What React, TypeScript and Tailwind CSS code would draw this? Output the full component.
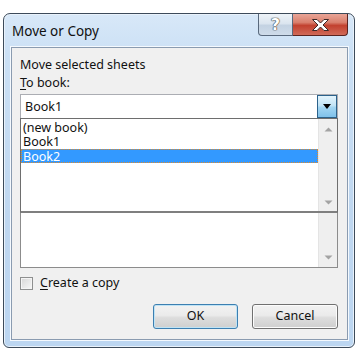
import React from "react";

const font = { fontFamily: '"Noto Sans", "Open Sans", Arial, sans-serif' };

function UpArrow() {
  return (
    <svg width="9" height="5" viewBox="0 0 9 5">
      <path d="M0.5 4.5 L4.5 0.5 L8.5 4.5 Z" fill="#a3a3a3" />
    </svg>
  );
}
function DownArrow() {
  return (
    <svg width="9" height="5" viewBox="0 0 9 5">
      <path d="M0.5 0.5 L4.5 4.5 L8.5 0.5 Z" fill="#a3a3a3" />
    </svg>
  );
}

export default function App() {
  return (
    <div className="w-[360px] h-[360px] bg-white pt-[13px] pl-[3px]" style={font}>
      <div className="w-[352px] h-[335px] border border-[#3d4b5a] rounded-t-[7px] rounded-b-[6px] bg-[linear-gradient(180deg,#d8e8f8_0%,#cbe0f5_12%,#bfd7f0_60%,#bcd6f1_100%)] flex flex-col shadow-[inset_0_0_0_1px_#e9f2fb]">
        {/* title bar */}
        <div className="h-[33px] flex items-start">
          <div className="pl-[8px] pt-[8px] text-[13.5px] leading-[18px] text-[#111]">Move or Copy</div>
          <div className="ml-auto mr-[6px] flex">
            <div className="w-[35px] h-[22px] border border-[#59697d] border-t-0 rounded-bl-[4px] bg-[linear-gradient(180deg,#eef3f8_0%,#dbe5ef_45%,#c3d2e2_55%,#cfdcea_100%)] flex items-center justify-center">
              <span className="text-[16px] leading-[16px] font-bold text-white [text-shadow:0_0_1px_#3b3b3b,0_0_1px_#3b3b3b,0_0_1px_#3b3b3b]" style={{ fontFamily: '"DejaVu Sans", sans-serif' }}>?</span>
            </div>
            <div className="w-[55px] h-[22px] border border-[#5a2420] border-t-0 border-l-0 rounded-br-[4px] bg-[linear-gradient(180deg,#e9a597_0%,#d9806e_40%,#c2412f_55%,#d06a58_100%)] flex items-center justify-center">
              <svg width="19" height="14" viewBox="0 0 19 14">
                <path d="M1.5 1.5 H6 L9.5 5 L13 1.5 H17.5 L12 7 L17.5 12.5 H13 L9.5 9 L6 12.5 H1.5 L7 7 Z" fill="#ffffff" stroke="#3b2a2a" strokeWidth="1" strokeLinejoin="round" />
              </svg>
            </div>
          </div>
        </div>
        {/* panel */}
        <div className="ml-[7px] mr-[6px] h-[293px] border border-[#8a9bb0] bg-[#f0f0f0] pl-[8px] pr-[9px] pt-[8px] flex flex-col text-[12.5px] text-[#111] shadow-[0_0_0_1px_#f4f9fe]">
          <div className="h-[18px] leading-[18px]">Move selected sheets</div>
          <div className="h-[18px] leading-[18px]"><span className="underline underline-offset-2">T</span>o book:</div>
          {/* combo */}
          <div className="mt-[2px] h-[24px] bg-white border border-[#abadb3] border-b-0 flex items-stretch">
            <div className="flex-1 pl-[4px] leading-[23px]">Book1</div>
            <div className="w-[20px] border border-[#2c628b] bg-[linear-gradient(180deg,#e3f4fc_0%,#c2e4f6_45%,#a1d5f2_55%,#7fc1ea_100%)] flex items-center justify-center">
              <svg width="8" height="5" viewBox="0 0 8 5"><path d="M0 0 H8 L4 5 Z" fill="#000" /></svg>
            </div>
          </div>
          {/* dropdown list */}
          <div className="h-[95px] bg-white border border-[#6e6e6e] border-b-2 border-b-[#7f7f7f] flex">
            <div className="flex-1 pt-[2px]">
              <div className="h-[14px] leading-[14px] pl-[2px]">(new book)</div>
              <div className="h-[14px] leading-[14px] pl-[2px]">Book1</div>
              <div className="h-[14px] leading-[13px] pl-[1px] bg-[#3399ff] text-white border border-dotted border-[#e08a2a]">Book2</div>
            </div>
            <div className="w-[19px] bg-[#efefef] border-l border-[#e4e4e4] flex flex-col items-center justify-between pt-[8px] pb-[6px]">
              <UpArrow />
              <DownArrow />
            </div>
          </div>
          {/* lower list box */}
          <div className="h-[55px] bg-white border border-[#8c8c8c] border-t-0 flex justify-end">
            <div className="w-[19px] bg-[#efefef] border-l border-[#e4e4e4] flex flex-col items-center justify-end pb-[7px]">
              <DownArrow />
            </div>
          </div>
          {/* checkbox */}
          <div className="mt-[8px] h-[14px] flex items-center">
            <div className="w-[13px] h-[13px] border border-[#8e8f8f] bg-[linear-gradient(135deg,#d6d6d6,#f7f7f7)] shadow-[inset_0_0_0_1px_#f4f4f4]" />
            <div className="ml-[7px] leading-[14px]"><span className="underline underline-offset-2">C</span>reate a copy</div>
          </div>
          {/* buttons */}
          <div className="mt-[14px] flex justify-end gap-[14px]">
            <div className="w-[85px] h-[25px] rounded-[3px] border border-[#3c7fb1] bg-[linear-gradient(180deg,#f2f2f2_0%,#ebebeb_45%,#dddddd_55%,#cfcfcf_100%)] shadow-[inset_0_0_0_1px_#bfe3f5] flex items-center justify-center">OK</div>
            <div className="w-[86px] h-[25px] rounded-[3px] border border-[#707070] bg-[linear-gradient(180deg,#f2f2f2_0%,#ebebeb_45%,#dddddd_55%,#cfcfcf_100%)] shadow-[inset_0_0_0_1px_#fcfcfc] flex items-center justify-center">Cancel</div>
          </div>
        </div>
      </div>
    </div>
  );
}
